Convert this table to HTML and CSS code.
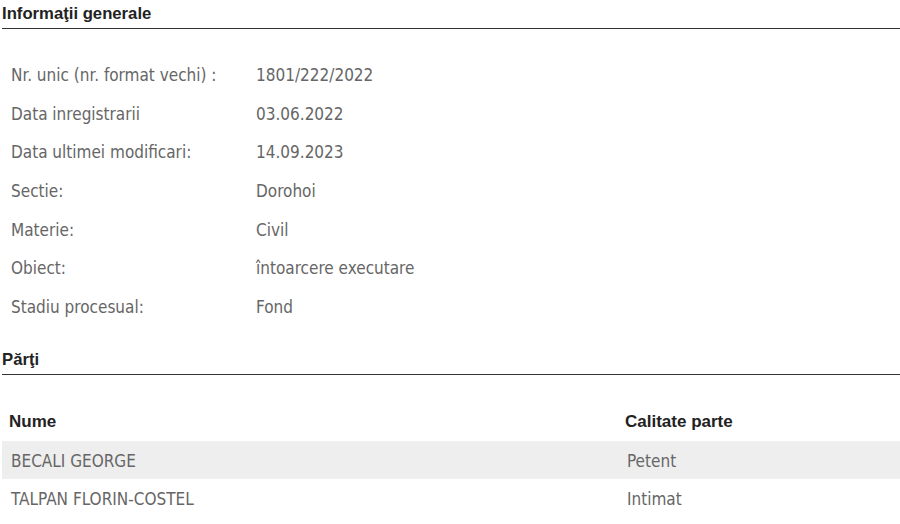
FILE: index.html
```html
<!DOCTYPE html>
<html lang="ro">
<head>
<meta charset="utf-8">
<link rel="stylesheet" href="styles.css">
</head>
<body>
<section class="section">
  <h2 class="title">Informaţii generale</h2>
  <div class="info">
    <div class="row"><span class="label">Nr. unic (nr. format vechi) :</span><span class="value">1801/222/2022</span></div>
    <div class="row"><span class="label">Data inregistrarii</span><span class="value">03.06.2022</span></div>
    <div class="row"><span class="label">Data ultimei modificari:</span><span class="value">14.09.2023</span></div>
    <div class="row"><span class="label">Sectie:</span><span class="value">Dorohoi</span></div>
    <div class="row"><span class="label">Materie:</span><span class="value">Civil</span></div>
    <div class="row"><span class="label">Obiect:</span><span class="value">întoarcere executare</span></div>
    <div class="row"><span class="label">Stadiu procesual:</span><span class="value">Fond</span></div>
  </div>
</section>
<section class="section">
  <h2 class="title">Părţi</h2>
  <table class="parties">
    <thead>
      <tr><th class="c1">Nume</th><th>Calitate parte</th></tr>
    </thead>
    <tbody>
      <tr class="odd"><td class="c1">BECALI GEORGE</td><td>Petent</td></tr>
      <tr><td class="c1">TALPAN FLORIN-COSTEL</td><td>Intimat</td></tr>
    </tbody>
  </table>
</section>
</body>
</html>
```
FILE: styles.css
```css
html, body { margin: 0; padding: 0; background: #fff; }
body { padding: 0 0 0 2px; font-family: "DejaVu Sans Condensed", "DejaVu Sans", sans-serif; color: #666; }
.title {
  margin: 0;
  padding: 4px 0 5px 0;
  font-family: "Liberation Sans", Arial, sans-serif;
  font-size: 16.7px;
  font-weight: bold;
  color: #222;
  border-bottom: 1px solid #333;
  height: 19px;
  line-height: 19px;
}
.info { padding: 27px 0 20px 9px; }
.row { display: flex; height: 38.6px; align-items: center; font-size: 17px; }
.label { width: 245px; }
.parties { width: 100%; border-collapse: collapse; margin-top: 28px; font-size: 17px; }
.parties th, .parties td { box-sizing: border-box; }
.parties th { text-align: left; font-family: "Liberation Sans", Arial, sans-serif; font-weight: bold; color: #222; height: 38px; padding: 0 0 0 7px; }
.parties td { height: 38px; padding: 2px 0 0 9px; }
.parties .c1 { width: 616px; }
.parties tr.odd td { background: #eee; }
```
